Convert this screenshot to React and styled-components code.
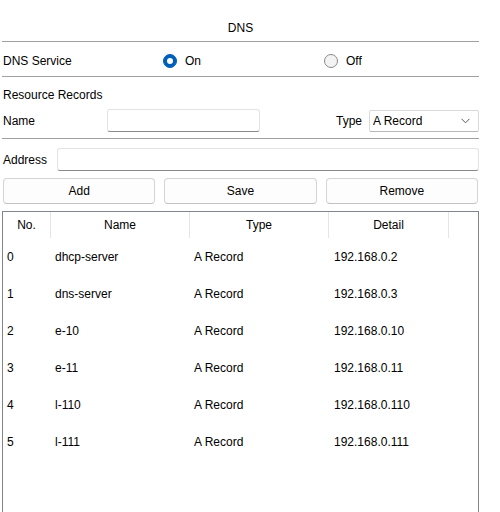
import React, { useState } from 'react'
import styled, { createGlobalStyle } from 'styled-components'

const GlobalStyle = createGlobalStyle`
    body {
        margin: 0;
        background: #ffffff;
        font-family: "Liberation Sans", Arial, sans-serif;
        font-size: 12px;
        color: #000;
    }
`

const Page = styled.div`
    width: 477px;
    height: 512px;
    padding-left: 2px;
    overflow: hidden;
`

const Title = styled.div`
    height: 42px;
    box-sizing: border-box;
    padding-top: 20px;
    line-height: 16px;
    text-align: center;
    border-bottom: 1px solid #a0a0a0;
`

const ServiceRow = styled.div`
    display: grid;
    grid-template-columns: 161px 161px 1fr;
    align-items: center;
    height: 35px;
    box-sizing: border-box;
    padding-top: 4px;
    border-bottom: 1px solid #a0a0a0;
`

const Label = styled.span`
    padding-left: ${p => p.$indent || 1}px;
    margin-right: ${p => p.$gap || 0}px;
    white-space: nowrap;
`

const RadioOption = styled.label`
    display: flex;
    align-items: center;
    gap: 8px;
    cursor: pointer;
`

const RadioDot = styled.span`
    width: 14px;
    height: 14px;
    box-sizing: border-box;
    border-radius: 50%;
    display: flex;
    align-items: center;
    justify-content: center;
    background: ${p => (p.$checked ? '#005fb8' : '#f3f3f3')};
    border: 1px solid ${p => (p.$checked ? '#005fb8' : '#8a8a8a')};

    &::after {
        content: '';
        width: 6px;
        height: 6px;
        border-radius: 50%;
        background: #fff;
        display: ${p => (p.$checked ? 'block' : 'none')};
    }
`

const Section = styled.div`
    border-bottom: 1px solid #a0a0a0;
    padding-bottom: 6px;
`

const SectionHead = styled.div`
    padding: 10px 0 0 1px;
    line-height: 16px;
`

const FieldRow = styled.div`
    display: flex;
    align-items: center;
    margin-top: ${p => p.$top || 0}px;
`

const TextInput = styled.input`
    box-sizing: border-box;
    height: 23px;
    width: ${p => (p.$width ? `${p.$width}px` : 'auto')};
    flex: ${p => (p.$grow ? 1 : 'none')};
    margin-left: ${p => p.$left || 0}px;
    border: 1px solid #e3e3e3;
    border-bottom-color: #8a8a8a;
    border-radius: 3px;
    background: #fff;
    font: inherit;
    padding: 0 4px;
    outline: none;
`

const Spacer = styled.div`
    flex: 1;
`

const SelectBox = styled.div`
    box-sizing: border-box;
    width: 110px;
    height: 22px;
    display: flex;
    align-items: center;
    justify-content: space-between;
    padding: 0 8px 0 3px;
    border: 1px solid #d9d9d9;
    border-bottom-color: #b8b8b8;
    border-radius: 2px;
    background: #fff;
`

const Buttons = styled.div`
    display: grid;
    grid-template-columns: repeat(3, 1fr);
    gap: 9px;
    margin: 7px 0 0 1px;
    width: 475px;
`

const Button = styled.button`
    height: 26px;
    border: 1px solid #d4d4d4;
    border-bottom-color: #c2c2c2;
    border-radius: 4px;
    background: #fdfdfd;
    font: inherit;
    color: #000;
    cursor: pointer;
`

const Table = styled.div`
    margin-top: 7px;
    height: 320px;
    border: 1px solid #80868b;
    box-sizing: border-box;
    width: 477px;
`

const Cols = styled.div`
    display: grid;
    grid-template-columns: 48px 139px 139px 120px 1fr;
    height: ${p => p.$height}px;
    align-items: center;
`

const HeadCell = styled.div`
    height: 100%;
    display: flex;
    align-items: center;
    justify-content: center;
    border-right: ${p => (p.$last ? 'none' : '1px solid #e5e5e5')};
`

const Cell = styled.div`
    padding-left: ${p => p.$pad || 4}px;
    padding-top: 1px;
    white-space: nowrap;
`

const records = [
    { no: 0, name: 'dhcp-server', type: 'A Record', detail: '192.168.0.2' },
    { no: 1, name: 'dns-server', type: 'A Record', detail: '192.168.0.3' },
    { no: 2, name: 'e-10', type: 'A Record', detail: '192.168.0.10' },
    { no: 3, name: 'e-11', type: 'A Record', detail: '192.168.0.11' },
    { no: 4, name: 'l-110', type: 'A Record', detail: '192.168.0.110' },
    { no: 5, name: 'l-111', type: 'A Record', detail: '192.168.0.111' },
]

const Chevron = () => (
    <svg width="9" height="6" viewBox="0 0 9 6">
        <path d="M0.5 0.8 L4.5 4.8 L8.5 0.8" fill="none" stroke="#555" strokeWidth="1" />
    </svg>
)

const App = () => {
    const [service, setService] = useState('on')

    return (
        <Page>
            <GlobalStyle />
            <Title>DNS</Title>

            <ServiceRow>
                <Label>DNS Service</Label>
                <RadioOption onClick={() => setService('on')}>
                    <RadioDot $checked={service === 'on'} />
                    On
                </RadioOption>
                <RadioOption onClick={() => setService('off')}>
                    <RadioDot $checked={service === 'off'} />
                    Off
                </RadioOption>
            </ServiceRow>

            <Section>
                <SectionHead>Resource Records</SectionHead>
                <FieldRow $top={6}>
                    <Label>Name</Label>
                    <TextInput $width={153} $left={72} />
                    <Spacer />
                    <Label $gap={7}>Type</Label>
                    <SelectBox>
                        <span>A Record</span>
                        <Chevron />
                    </SelectBox>
                </FieldRow>
            </Section>

            <FieldRow $top={9}>
                <Label>Address</Label>
                <TextInput $grow $left={10} />
            </FieldRow>

            <Buttons>
                <Button>Add</Button>
                <Button>Save</Button>
                <Button>Remove</Button>
            </Buttons>

            <Table>
                <Cols $height={26}>
                    <HeadCell>No.</HeadCell>
                    <HeadCell>Name</HeadCell>
                    <HeadCell>Type</HeadCell>
                    <HeadCell>Detail</HeadCell>
                    <HeadCell $last />
                </Cols>
                {records.map(r => (
                    <Cols $height={37} key={r.no}>
                        <Cell>{r.no}</Cell>
                        <Cell>{r.name}</Cell>
                        <Cell>{r.type}</Cell>
                        <Cell $pad={5}>{r.detail}</Cell>
                        <Cell />
                    </Cols>
                ))}
            </Table>
        </Page>
    )
}

export default App
